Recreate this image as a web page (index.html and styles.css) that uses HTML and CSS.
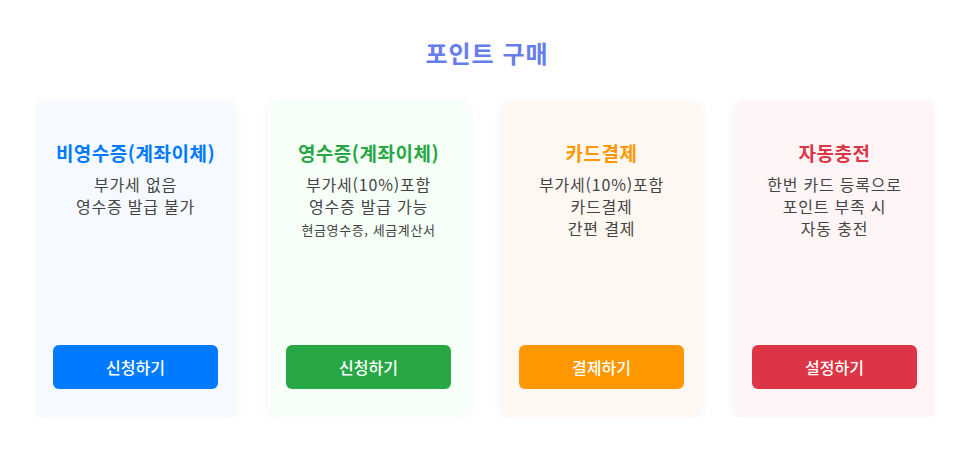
FILE: index.html
```html
<!DOCTYPE html>
<html lang="ko">
<head>
<meta charset="utf-8">
<title>포인트 구매</title>
<link rel="stylesheet" href="styles.css">
</head>
<body>
<div class="page">
  <h2 class="page-title">포인트 구매</h2>
  <div class="cards">
    <div class="card card-blue">
      <h3 class="card-title">비영수증(계좌이체)</h3>
      <p class="card-desc">부가세 없음<br>영수증 발급 불가</p>
      <button class="btn">신청하기</button>
    </div>
    <div class="card card-green">
      <h3 class="card-title">영수증(계좌이체)</h3>
      <p class="card-desc">부가세(10%)포함<br>영수증 발급 가능<br><span class="small">현금영수증, 세금계산서</span></p>
      <button class="btn">신청하기</button>
    </div>
    <div class="card card-orange">
      <h3 class="card-title">카드결제</h3>
      <p class="card-desc">부가세(10%)포함<br>카드결제<br>간편 결제</p>
      <button class="btn">결제하기</button>
    </div>
    <div class="card card-red">
      <h3 class="card-title">자동충전</h3>
      <p class="card-desc">한번 카드 등록으로<br>포인트 부족 시<br>자동 충전</p>
      <button class="btn">설정하기</button>
    </div>
  </div>
</div>
</body>
</html>
```

FILE: styles.css
```css
html, body {
  margin: 0;
  padding: 0;
  background: #ffffff;
}
body {
  font-family: "Noto Sans CJK KR", "Noto Sans", sans-serif;
  color: #333;
}
.page {
  width: 980px;
}
.page-title {
  margin: 37px 0 22px;
  padding-right: 6px;
  font-size: 24px;
  line-height: 32px;
  font-weight: 700;
  letter-spacing: 1px;
  color: #667eea;
  text-align: center;
}
.cards {
  display: flex;
  gap: 32px;
  width: 900px;
  margin-left: 35px;
  padding-top: 10px;
  overflow: hidden;
}
.card {
  flex: 0 0 201px;
  height: 316px;
  box-sizing: border-box;
  padding: 41px 14px 28px;
  border-radius: 10px;
  box-shadow: 0 2px 10px rgba(0, 0, 0, 0.06);
  display: flex;
  flex-direction: column;
  align-items: stretch;
  text-align: center;
}
.card-title {
  margin: 0 0 9px;
  font-size: 19px;
  line-height: 22px;
  font-weight: 700;
  letter-spacing: 0.5px;
}
.card-desc {
  margin: 0;
  font-size: 16px;
  line-height: 22px;
  letter-spacing: 0.8px;
  color: #444;
}
.card-desc .small {
  font-size: 13px;
  letter-spacing: 0.6px;
}
.btn {
  margin: auto 4px 0;
  height: 44px;
  border: none;
  border-radius: 6px;
  color: #fff;
  font-family: inherit;
  font-size: 16px;
  font-weight: 500;
  cursor: pointer;
}
.card-blue { background: #f6f9ff; }
.card-blue .card-title { color: #007bff; }
.card-blue .btn { background: #007bff; }
.card-green { background: #f6fff8; }
.card-green .card-title { color: #28a745; }
.card-green .btn { background: #28a745; }
.card-orange { background: #fff8f2; }
.card-orange .card-title { color: #ff9800; }
.card-orange .btn { background: #ff9800; }
.card-red { background: #fff5f6; }
.card-red .card-title { color: #dc3545; }
.card-red .btn { background: #dc3545; }
```
